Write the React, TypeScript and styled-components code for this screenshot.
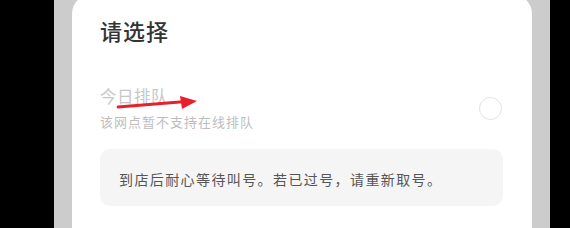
import styled, { createGlobalStyle } from 'styled-components'

const GlobalStyle = createGlobalStyle`
  html, body {
    margin: 0;
    padding: 0;
    background: #000;
  }
  body {
    font-family: "Noto Sans CJK SC", "Noto Sans", sans-serif;
  }
`

const Screen = styled.div`
  width: 570px;
  height: 228px;
  overflow: hidden;
  background: #000;
  display: flex;
  padding-left: 54px;
  box-sizing: border-box;
`

const Backdrop = styled.div`
  width: 496px;
  height: 100%;
  background: #cccccc;
  padding: 0 18px;
  box-sizing: border-box;
`

const Sheet = styled.div`
  position: relative;
  margin-top: -6px;
  height: 240px;
  background: #fff;
  border-radius: 20px 20px 0 0;
  padding: 21px 29px 0 28px;
  box-sizing: border-box;
`

const Title = styled.div`
  font-size: 22px;
  line-height: 30px;
  font-weight: 500;
  color: #333;
  letter-spacing: 1px;
`

const OptionRow = styled.div`
  display: flex;
  align-items: center;
  justify-content: space-between;
  margin-top: 40px;
`

const OptionText = styled.div`
  display: flex;
  flex-direction: column;
`

const OptionName = styled.div<{ $disabled?: boolean }>`
  font-size: 16.5px;
  line-height: 22px;
  color: ${(p) => (p.$disabled ? '#c8c8c8' : '#333')};
  letter-spacing: 0.5px;
`

const OptionDesc = styled.div`
  margin-top: 6px;
  font-size: 13px;
  line-height: 18px;
  color: #bdbdbd;
  letter-spacing: 1px;
`

const Radio = styled.span`
  width: 21px;
  height: 21px;
  border-radius: 50%;
  border: 1.5px solid #e2e2e2;
  margin-right: 1px;
`

const Notice = styled.div`
  margin-top: 18px;
  height: 57px;
  background: #f5f5f5;
  border-radius: 10px;
  display: flex;
  align-items: center;
  padding: 2px 19px 0;
  box-sizing: border-box;
  font-size: 14px;
  color: #555;
  letter-spacing: 1.4px;
`

const Arrow = styled.svg`
  position: absolute;
  left: 44px;
  top: 99px;
  overflow: visible;
`

export default function App() {
  return (
    <>
      <GlobalStyle />
      <Screen>
        <Backdrop>
          <Sheet>
            <Title>请选择</Title>
            <OptionRow>
              <OptionText>
                <OptionName $disabled>今日排队</OptionName>
                <OptionDesc>该网点暂不支持在线排队</OptionDesc>
              </OptionText>
              <Radio />
            </OptionRow>
            <Notice>到店后耐心等待叫号。若已过号，请重新取号。</Notice>
            <Arrow width="82" height="18" viewBox="0 0 82 18">
              <line x1="2" y1="14" x2="70" y2="8.5" stroke="#e8202a" strokeWidth="2.8" strokeLinecap="round" />
              <polygon points="81,8 64,3 66,16" fill="#e8202a" />
            </Arrow>
          </Sheet>
        </Backdrop>
      </Screen>
    </>
  )
}
